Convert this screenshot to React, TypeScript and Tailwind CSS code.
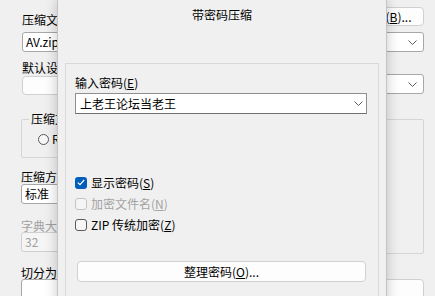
import React from "react";

const Chevron = ({ color = "#5c5c5c" }: { color?: string }) => (
  <svg width="9" height="5" viewBox="0 0 9 5" fill="none">
    <path d="M0.5 0.5 L4.5 4.5 L8.5 0.5" stroke={color} strokeWidth="1" />
  </svg>
);

const Mn = ({ c }: { c: string }) => (
  <span className="underline underline-offset-[1px] decoration-1">{c}</span>
);

const BgCombo = ({
  text,
  disabled,
  cls,
}: {
  text?: string;
  disabled?: boolean;
  cls?: string;
}) => (
  <div
    className={`flex items-center justify-between h-[20px] pl-[3px] pr-[6px] rounded-[3px] border ${
      disabled
        ? "bg-[#f5f5f5] border-[#cfcfcf] text-[#a0a0a0]"
        : "bg-white border-[#a8a8a8] text-black"
    } ${cls ?? ""}`}
  >
    <span className="leading-[12px]">{text ?? ""}</span>
    <Chevron color={disabled ? "#b0b0b0" : "#5c5c5c"} />
  </div>
);

const BgButton = ({ children, cls }: { children: React.ReactNode; cls?: string }) => (
  <div
    className={`flex items-center justify-center bg-[#fdfdfd] border border-[#d0d0d0] rounded-[4px] leading-[12px] ${
      cls ?? ""
    }`}
  >
    {children}
  </div>
);

const Label = ({
  children,
  cls,
  disabled,
}: {
  children: React.ReactNode;
  cls?: string;
  disabled?: boolean;
}) => (
  <div
    className={`h-[12px] leading-[12px] whitespace-nowrap ${
      disabled ? "text-[#a0a0a0]" : "text-black"
    } ${cls ?? ""}`}
  >
    {children}
  </div>
);

const Radio = ({ label }: { label: string }) => (
  <div className="flex items-center gap-[3px]">
    <div className="w-[11px] h-[11px] rounded-full border border-[#5a5a5a] bg-[#f7f7f7]" />
    <span className="leading-[12px]">{label}</span>
  </div>
);

const CheckRow = ({
  label,
  mn,
  prefix,
  checked,
  disabled,
}: {
  label: string;
  mn: string;
  prefix?: string;
  checked?: boolean;
  disabled?: boolean;
}) => (
  <div className="flex items-center h-[21px] gap-[4px]">
    {checked ? (
      <div className="w-[12px] h-[12px] rounded-[3px] bg-[#005fb8] flex items-center justify-center">
        <svg width="8" height="7" viewBox="0 0 8 7" fill="none">
          <path d="M0.8 3.6 L3 5.7 L7.2 1" stroke="white" strokeWidth="1.2" />
        </svg>
      </div>
    ) : (
      <div
        className={`w-[12px] h-[12px] rounded-[3px] border ${
          disabled ? "border-[#c4c4c4] bg-[#f5f5f5]" : "border-[#5a5a5a] bg-[#f7f7f7]"
        }`}
      />
    )}
    <span
      className={`leading-[12px] whitespace-nowrap ${
        disabled ? "text-[#a3a3a3]" : "text-black"
      }`}
    >
      {prefix}
      {label}(<Mn c={mn} />)
    </span>
  </div>
);

export default function App() {
  return (
    <div className="relative w-[435px] h-[296px] overflow-hidden bg-[#f0f0f0] font-['Noto_Sans_CJK_SC',sans-serif] text-[12px] text-black">
      {/* Background window */}
      <div className="pl-[21px] pr-[11px] pt-[7px]">
        <div className="flex items-start justify-between">
          <Label cls="mt-[7px] pl-[1px]">
            压缩文件名(<Mn c="A" />)
          </Label>
          <BgButton cls="w-[75px] h-[19px]">
            浏览(<Mn c="B" />)...
          </BgButton>
        </div>
        <BgCombo text="AV.zip" cls="mt-[6px] ml-[1px]" />
        <div className="grid grid-cols-[190px_1fr] gap-x-[12px]">
          {/* left column */}
          <div className="flex flex-col">
            <Label cls="mt-[10px] pl-[1px]">默认设置</Label>
            <BgButton cls="mt-[2px] ml-[1px] w-[140px] h-[19px]">
              配置(<Mn c="F" />)...
            </BgButton>
            <div className="relative mt-[24px] h-[39px] border border-[#d5d5d5] rounded-[2px] pt-[13px] pl-[16px]">
              <div className="absolute -top-[7px] left-[7px] px-[2px] bg-[#f0f0f0] leading-[12px]">
                压缩文件格式
              </div>
              <div className="flex items-center gap-[14px]">
                <Radio label="RAR" />
                <Radio label="RAR4" />
                <Radio label="ZIP" />
              </div>
            </div>
            <Label cls="mt-[13px]">
              压缩方式(<Mn c="C" />)
            </Label>
            <BgCombo text="标准" cls="mt-[1px]" />
            <Label cls="mt-[16px]" disabled>
              字典大小(I)
            </Label>
            <div className="flex gap-[6px]">
              <BgCombo text="32" disabled cls="flex-1" />
            </div>
            <Label cls="mt-[15px]">
              切分为分卷(<Mn c="V" />)，大小
            </Label>
            <div className="flex gap-[6px]">
              <div className="flex-1 h-[20px] bg-white border border-[#a8a8a8] rounded-[3px]" />
            </div>
          </div>
          {/* right column */}
          <div className="flex flex-col">
            <Label cls="mt-[8px]">
              更新方式(<Mn c="U" />)
            </Label>
            <BgCombo text="添加并替换文件" cls="mt-[2px]" />
            <div className="relative mt-[25px] h-[135px] border border-[#d5d5d5] rounded-[2px]">
              <div className="absolute -top-[7px] left-[7px] px-[2px] bg-[#f0f0f0] leading-[12px]">
                压缩选项
              </div>
            </div>
            <BgButton cls="mt-[25px] h-[21px]">
              设置密码(<Mn c="P" />)...
            </BgButton>
          </div>
        </div>
      </div>

      {/* Password dialog */}
      <div className="absolute left-[57px] top-0 w-[330px] h-[310px] bg-[#f0f0f0] border-x border-[#c4c4c4] shadow-[0_0_12px_rgba(0,0,0,0.22)] flex flex-col">
        <div className="pt-[9px] text-center leading-[12px] h-[21px]">带密码压缩</div>
        <div className="mt-[42px] mx-[7px] flex-1 border-t border-x border-[#d9d9d9] pt-[13px] pl-[9px] pr-[11px] flex flex-col">
          <Label>
            输入密码(<Mn c="E" />)
          </Label>
          <div className="mt-[4px] h-[21px] flex items-center justify-between bg-white border border-[#8f8f8f] border-b-[#6f6f6f] pl-[4px] pr-[3px]">
            <span className="leading-[12px]">上老王论坛当老王</span>
            <Chevron />
          </div>
          <div className="mt-[58px] flex flex-col">
            <CheckRow label="显示密码" mn="S" checked />
            <CheckRow label="加密文件名" mn="N" disabled />
            <CheckRow prefix="ZIP " label="传统加密" mn="Z" />
          </div>
          <div className="mt-[26px] ml-[2px] mr-[1px] h-[21px] flex items-center justify-center bg-[#fdfdfd] border border-[#d0d0d0] rounded-[4px] leading-[12px]">
            整理密码(<Mn c="O" />)...
          </div>
        </div>
      </div>
    </div>
  );
}
